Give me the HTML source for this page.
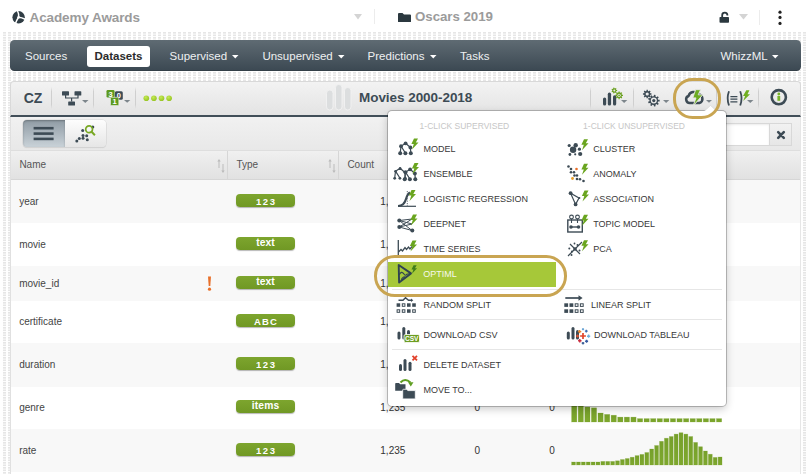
<!DOCTYPE html>
<html><head><meta charset="utf-8"><title>BigML</title><style>
*{margin:0;padding:0;box-sizing:border-box}
html,body{width:810px;height:474px;overflow:hidden;background:#fff;font-family:"Liberation Sans",sans-serif}
.a{position:absolute}
.t{position:absolute;white-space:nowrap;line-height:normal}
svg{overflow:visible}
</style></head><body>
<div class="a" style="left:2px;top:32px;width:806px;height:442px;background-color:#fff;background-image:linear-gradient(0deg,#fff 1px,transparent 1px),linear-gradient(90deg,transparent 1px,#e6e6e6 1px,#e6e6e6 4px,transparent 4px);background-size:5px 2.5px,5px 5px"></div>
<svg class="a" style="left:12px;top:11px;" width="13" height="13" viewBox="0 0 13 13"><circle cx="6.6" cy="6.3" r="6.2" fill="#2f3c44"/><path d="M5.4 -0.5 Q7.2 3.2 6.6 6.3 M6.6 6.3 Q9.8 6.6 13.2 8.2 M6.6 6.3 Q4.6 9.2 3.4 12.8" stroke="#fff" stroke-width="1.5" fill="none"/><circle cx="6.6" cy="6.3" r="1.3" fill="#fff"/></svg>
<div class="t" style="left:29.50px;top:9.58px;font-size:13.5px;color:#9b9b9b;font-weight:700;letter-spacing:-0.1px;">Academy Awards</div>
<svg class="a" style="left:353.5px;top:14px;" width="8" height="6" viewBox="0 0 8 6"><path d="M0 0 H8 L4 5.5 Z" fill="#d4d4d4"/></svg>
<div class="a" style="left:373.5px;top:9px;width:1px;height:15px;background:#ececec"></div>
<svg class="a" style="left:397.5px;top:12.5px;" width="13" height="9" viewBox="0 0 13 9"><path d="M0 1 Q0 0 1 0 H4.5 L6 1.5 H12 Q13 1.5 13 2.5 V8.5 Q13 9 12.5 9 H0.5 Q0 9 0 8.5 Z" fill="#2b383f"/></svg>
<div class="t" style="left:415.00px;top:9.26px;font-size:13.3px;color:#9b9b9b;font-weight:700;letter-spacing:-0.05px;">Oscars 2019</div>
<svg class="a" style="left:718.5px;top:11.5px;" width="11" height="11" viewBox="0 0 11 11"><path d="M3.2 5 V3.2 Q3.2 0.6 5.8 0.6 Q8.4 0.6 8.4 3.2 V3.6" stroke="#2b383f" stroke-width="1.8" fill="none"/><rect x="0.5" y="5" width="9.5" height="5.8" rx="0.8" fill="#2b383f"/></svg>
<svg class="a" style="left:738.5px;top:14px;" width="9" height="6" viewBox="0 0 9 6"><path d="M0 0 H9 L4.5 5.5 Z" fill="#d4d4d4"/></svg>
<div class="a" style="left:758.5px;top:9.5px;width:1px;height:15px;background:#ececec"></div>
<svg class="a" style="left:778px;top:10px;" width="4" height="16" viewBox="0 0 4 16"><circle cx="2" cy="2.2" r="1.6" fill="#222"/><circle cx="2" cy="7.4" r="1.6" fill="#222"/><circle cx="2" cy="13.4" r="1.6" fill="#222"/></svg>
<div class="a" style="left:10px;top:40px;width:790.5px;height:30.8px;border-radius:4.5px;background:linear-gradient(#5f6b73,#3b4852);box-shadow:inset 0 -1px 0 rgba(0,0,0,.12)"></div>
<div class="t" style="left:25.00px;top:49.79px;font-size:11.5px;color:#eef0f1;">Sources</div>
<div class="a" style="left:87px;top:46px;width:63px;height:20.5px;background:#fff;border-radius:3px"></div>
<div class="t" style="left:94.50px;top:49.79px;font-size:11.5px;color:#2b2b2b;font-weight:700;">Datasets</div>
<div class="t" style="left:169.60px;top:49.79px;font-size:11.5px;color:#eef0f1;">Supervised</div>
<svg class="a" style="left:232px;top:55px;" width="6.5" height="3.5" viewBox="0 0 6.5 3.5"><path d="M0 0 H6.5 L3.25 3.5 Z" fill="#fff"/></svg>
<div class="t" style="left:262.40px;top:49.79px;font-size:11.5px;color:#eef0f1;">Unsupervised</div>
<svg class="a" style="left:337.5px;top:55px;" width="6.5" height="3.5" viewBox="0 0 6.5 3.5"><path d="M0 0 H6.5 L3.25 3.5 Z" fill="#fff"/></svg>
<div class="t" style="left:367.60px;top:49.79px;font-size:11.5px;color:#eef0f1;">Predictions</div>
<svg class="a" style="left:429.5px;top:55px;" width="6.5" height="3.5" viewBox="0 0 6.5 3.5"><path d="M0 0 H6.5 L3.25 3.5 Z" fill="#fff"/></svg>
<div class="t" style="left:460.00px;top:49.79px;font-size:11.5px;color:#eef0f1;">Tasks</div>
<div class="t" style="left:720.40px;top:49.79px;font-size:11.5px;color:#eef0f1;">WhizzML</div>
<svg class="a" style="left:771.5px;top:55px;" width="6.5" height="3.5" viewBox="0 0 6.5 3.5"><path d="M0 0 H6.5 L3.25 3.5 Z" fill="#fff"/></svg>
<div class="a" style="left:10px;top:80.5px;width:791px;height:36.5px;border-radius:4px 4px 0 0;background:linear-gradient(#f3f3f3,#e3e3e3);border:1px solid #d9d9d9;border-bottom:2px solid #414e58"></div>
<div class="t" style="left:23.70px;top:90.33px;font-size:14px;color:#3d4b55;font-weight:700;">CZ</div>
<div class="a" style="left:51px;top:87px;width:1px;height:22px;background:linear-gradient(rgba(0,0,0,0),#cfcfcf 20%,#cfcfcf 80%,rgba(0,0,0,0))"></div>
<div class="a" style="left:93px;top:87px;width:1px;height:22px;background:linear-gradient(rgba(0,0,0,0),#cfcfcf 20%,#cfcfcf 80%,rgba(0,0,0,0))"></div>
<div class="a" style="left:135px;top:87px;width:1px;height:22px;background:linear-gradient(rgba(0,0,0,0),#cfcfcf 20%,#cfcfcf 80%,rgba(0,0,0,0))"></div>
<div class="a" style="left:590px;top:87px;width:1px;height:22px;background:linear-gradient(rgba(0,0,0,0),#cfcfcf 20%,#cfcfcf 80%,rgba(0,0,0,0))"></div>
<div class="a" style="left:632.5px;top:87px;width:1px;height:22px;background:linear-gradient(rgba(0,0,0,0),#cfcfcf 20%,#cfcfcf 80%,rgba(0,0,0,0))"></div>
<div class="a" style="left:716px;top:87px;width:1px;height:22px;background:linear-gradient(rgba(0,0,0,0),#cfcfcf 20%,#cfcfcf 80%,rgba(0,0,0,0))"></div>
<div class="a" style="left:758px;top:87px;width:1px;height:22px;background:linear-gradient(rgba(0,0,0,0),#cfcfcf 20%,#cfcfcf 80%,rgba(0,0,0,0))"></div>
<svg class="a" style="left:62px;top:91px;" width="20" height="15" viewBox="0 0 20 15"><rect x="0" y="0.3" width="7" height="4.3" rx="0.6" fill="#3d4b55"/><rect x="12.5" y="0.3" width="6.8" height="4.3" rx="0.6" fill="#3d4b55"/><path d="M3.6 4 V7 H16 V4 M9.6 7 V10.5" stroke="#3d4b55" stroke-width="1.2" fill="none"/><rect x="6.2" y="10.4" width="6.8" height="4.2" rx="0.6" fill="#3d4b55"/></svg>
<svg class="a" style="left:82.3px;top:100px;" width="6.5" height="3" viewBox="0 0 6.5 3"><path d="M0 0 H6.5 L3.25 3 Z" fill="#7d868c"/></svg>
<svg class="a" style="left:105.5px;top:90px;" width="18" height="16" viewBox="0 0 18 16"><rect x="8.8" y="1.3" width="8" height="8.5" rx="1.5" fill="#3d4b55"/><text x="12.8" y="8.3" font-size="7.5" font-weight="bold" fill="#fff" text-anchor="middle" font-family="Liberation Sans">0</text><rect x="0.5" y="0" width="8" height="7.5" rx="1.2" fill="#5d9a1e"/><text x="4.5" y="6.6" font-size="7.5" font-weight="bold" fill="#fff" text-anchor="middle" font-family="Liberation Sans">3</text><rect x="4.5" y="7.3" width="8.3" height="8.3" rx="1.2" fill="#5d9a1e" stroke="#f0f0f0" stroke-width="0.6"/><text x="8.6" y="14.3" font-size="7.5" font-weight="bold" fill="#fff" text-anchor="middle" font-family="Liberation Sans">1</text></svg>
<svg class="a" style="left:124.2px;top:100.2px;" width="6.3" height="2.8" viewBox="0 0 6.3 2.8"><path d="M0 0 H6.3 L3.15 2.8 Z" fill="#7d868c"/></svg>
<svg class="a" style="left:143px;top:94.8px;" width="30" height="7" viewBox="0 0 30 7"><circle cx="3.3" cy="3.2" r="2.8" fill="url(#gd)"/><circle cx="10.9" cy="3.2" r="2.8" fill="url(#gd)"/><circle cx="18.5" cy="3.2" r="2.8" fill="url(#gd)"/><circle cx="26.1" cy="3.2" r="2.8" fill="url(#gd)"/><defs><radialGradient id="gd" cx="40%" cy="35%" r="70%"><stop offset="0" stop-color="#c4ea55"/><stop offset="1" stop-color="#94c21f"/></radialGradient></defs></svg>
<svg class="a" style="left:326px;top:84px;" width="26" height="27" viewBox="0 0 26 27"><rect x="0.5" y="6" width="6.5" height="20" rx="3.2" fill="#dcdedf" stroke="#f4f4f4" stroke-width="0.8"/><rect x="9.5" y="0.5" width="6.5" height="25.5" rx="3.2" fill="#dcdedf" stroke="#f4f4f4" stroke-width="0.8"/><rect x="18.5" y="3.5" width="6.5" height="22.5" rx="3.2" fill="#dcdedf" stroke="#f4f4f4" stroke-width="0.8"/></svg>
<div class="t" style="left:359.00px;top:89.98px;font-size:13.5px;color:#3d4b55;font-weight:700;letter-spacing:-0.05px;">Movies 2000-2018</div>
<svg class="a" style="left:600px;top:86px;" width="30" height="22" viewBox="0 0 30 22"><rect x="3" y="11.4" width="3.2" height="8.2" rx="1.6" fill="#3d4b55"/><rect x="7.8" y="6.6" width="3.3" height="13" rx="1.6" fill="#3d4b55"/><rect x="13" y="9.3" width="3.2" height="10.3" rx="1.6" fill="#3d4b55"/><path d="M16.37 3.93 L17.16 4.01 L17.16 4.99 L16.37 5.07 L16.04 5.76 L16.47 6.43 L15.70 7.04 L15.14 6.47 L14.40 6.64 L14.14 7.40 L13.18 7.18 L13.28 6.39 L12.68 5.91 L11.94 6.18 L11.51 5.30 L12.19 4.88 L12.19 4.12 L11.51 3.70 L11.94 2.82 L12.68 3.09 L13.28 2.61 L13.18 1.82 L14.14 1.60 L14.40 2.36 L15.14 2.53 L15.70 1.96 L16.47 2.57 L16.04 3.24 Z" fill="#6aa01f"/><circle cx="14.3" cy="4.5" r="1.0" fill="#e9e9e9"/><path d="M21.91 8.63 L22.96 8.72 L22.96 9.88 L21.91 9.97 L21.56 10.81 L22.24 11.62 L21.42 12.44 L20.61 11.76 L19.77 12.11 L19.68 13.16 L18.52 13.16 L18.43 12.11 L17.59 11.76 L16.78 12.44 L15.96 11.62 L16.64 10.81 L16.29 9.97 L15.24 9.88 L15.24 8.72 L16.29 8.63 L16.64 7.79 L15.96 6.98 L16.78 6.16 L17.59 6.84 L18.43 6.49 L18.52 5.44 L19.68 5.44 L19.77 6.49 L20.61 6.84 L21.42 6.16 L22.24 6.98 L21.56 7.79 Z" fill="#6aa01f"/><circle cx="19.1" cy="9.3" r="1.6" fill="#e9e9e9"/><circle cx="19.1" cy="9.3" r="0.9" fill="#6aa01f"/></svg>
<svg class="a" style="left:621.2px;top:100px;" width="6.3" height="2.9" viewBox="0 0 6.3 2.9"><path d="M0 0 H6.3 L3.15 2.9 Z" fill="#7d868c"/></svg>
<svg class="a" style="left:640px;top:86px;" width="22" height="22" viewBox="0 0 22 22"><path d="M10.29 7.26 L11.45 7.36 L11.45 8.64 L10.29 8.74 L9.91 9.66 L10.66 10.55 L9.75 11.46 L8.86 10.71 L7.94 11.09 L7.84 12.25 L6.56 12.25 L6.46 11.09 L5.54 10.71 L4.65 11.46 L3.74 10.55 L4.49 9.66 L4.11 8.74 L2.95 8.64 L2.95 7.36 L4.11 7.26 L4.49 6.34 L3.74 5.45 L4.65 4.54 L5.54 5.29 L6.46 4.91 L6.56 3.75 L7.84 3.75 L7.94 4.91 L8.86 5.29 L9.75 4.54 L10.66 5.45 L9.91 6.34 Z" fill="#3d4b55"/><circle cx="7.2" cy="8" r="1.6" fill="#e9e9e9"/><path d="M18.07 13.69 L19.65 13.82 L19.65 15.38 L18.07 15.51 L17.65 16.65 L18.78 17.76 L17.78 18.96 L16.49 18.04 L15.44 18.65 L15.58 20.22 L14.05 20.49 L13.65 18.96 L12.45 18.75 L11.55 20.05 L10.20 19.27 L10.88 17.84 L10.10 16.91 L8.57 17.33 L8.04 15.87 L9.48 15.21 L9.48 13.99 L8.04 13.33 L8.57 11.87 L10.10 12.29 L10.88 11.36 L10.20 9.93 L11.55 9.15 L12.45 10.45 L13.65 10.24 L14.05 8.71 L15.58 8.98 L15.44 10.55 L16.49 11.16 L17.78 10.24 L18.78 11.44 L17.65 12.55 Z" fill="#3d4b55"/><circle cx="13.8" cy="14.6" r="3.0" fill="#e9e9e9"/><circle cx="13.8" cy="14.6" r="1.6" fill="#3d4b55"/></svg>
<svg class="a" style="left:663.2px;top:100px;" width="6.3" height="2.9" viewBox="0 0 6.3 2.9"><path d="M0 0 H6.3 L3.15 2.9 Z" fill="#7d868c"/></svg>
<svg class="a" style="left:684px;top:88px;" width="22" height="20" viewBox="0 0 22 20"><path d="M6 15 A3.6 3.6 0 0 1 4.6 8 A5.2 5.2 0 0 1 14.2 6.6 A4.3 4.3 0 0 1 15.4 15 Z" stroke="#3d4b55" stroke-width="2.5" fill="none" stroke-linejoin="round"/><path d="M11.6 1.7 H16.6 L14.2 6.8 H18.8 L9 18.2 L12 9.9 H8.8 Z" fill="#6cab22" stroke="#e8e8e8" stroke-width="0.9" stroke-linejoin="round"/></svg>
<svg class="a" style="left:705.5px;top:100px;" width="6" height="2.8" viewBox="0 0 6 2.8"><path d="M0 0 H6 L3.0 2.8 Z" fill="#7d868c"/></svg>
<svg class="a" style="left:725px;top:89px;" width="30" height="18" viewBox="0 0 30 18"><path d="M4 2.2 Q1.3 9.2 4 16.5 M15.2 2.2 Q17.9 9.2 15.2 16.5" stroke="#3d4b55" stroke-width="1.8" fill="none"/><path d="M5.4 7.6 H12.4 M5.4 10.2 H12.4 M5.4 12.8 H12.4" stroke="#3d4b55" stroke-width="1.25"/><path d="M21.3 1.2 H24.4 L22.5 5.3 H25 L18.2 11.9 L20.1 6.9 H18 Z" fill="#6fae1f"/></svg>
<svg class="a" style="left:747.3px;top:99.8px;" width="6.5" height="2.9" viewBox="0 0 6.5 2.9"><path d="M0 0 H6.5 L3.25 2.9 Z" fill="#7d868c"/></svg>
<svg class="a" style="left:769px;top:88px;" width="20" height="20" viewBox="0 0 20 20"><circle cx="9.8" cy="9.2" r="7.1" stroke="#3d4b55" stroke-width="2.6" fill="none"/><circle cx="9.8" cy="6" r="1.4" fill="#7ab52a"/><rect x="8.4" y="8" width="2.8" height="4.8" fill="#7ab52a"/></svg>
<div class="a" style="left:10px;top:117px;width:790px;height:33px;background:linear-gradient(#f1f1f1,#e8e8e8)"></div>
<div class="a" style="left:23px;top:120px;width:83px;height:26.5px;border-radius:4px;background:linear-gradient(#fdfdfd,#e6e6e6);box-shadow:0 0 0 0.6px #d6d6d6,0 1px 1px rgba(0,0,0,.12)"></div>
<div class="a" style="left:23px;top:120px;width:41.5px;height:26.5px;border-radius:4px 0 0 4px;background:linear-gradient(#8f9ba4,#c9d2d8);box-shadow:inset 0 1px 2px rgba(0,0,0,.25)"></div>
<svg class="a" style="left:33px;top:126px;" width="21" height="15" viewBox="0 0 21 15"><rect x="0.6" y="0.9" width="20" height="2.6" fill="#3d4b55"/><rect x="0.6" y="6.3" width="20" height="2.6" fill="#3d4b55"/><rect x="0.6" y="11.6" width="20" height="2.6" fill="#3d4b55"/></svg>
<svg class="a" style="left:74px;top:124px;" width="24" height="20" viewBox="0 0 24 20"><g fill="#3d4b55"><circle cx="2.8" cy="16.9" r="1.5"/><circle cx="5.3" cy="14.5" r="1.5"/><circle cx="9" cy="14.2" r="1.5"/><circle cx="9" cy="11.4" r="1.5"/><circle cx="12.7" cy="11.7" r="1.5"/><circle cx="13.3" cy="15.7" r="1.5"/><circle cx="8.7" cy="6.4" r="1.5"/><circle cx="18.8" cy="3.1" r="1.5"/></g><circle cx="15.1" cy="5.2" r="3.4" stroke="#78a824" stroke-width="1.7" fill="none"/><path d="M17.6 7.8 L20.9 11.3" stroke="#78a824" stroke-width="2"/></svg>
<div class="a" style="left:500px;top:122.5px;width:269px;height:23.7px;background:#fff;border:1px solid #d8d8d8;border-right:none;box-shadow:inset 0 1px 2px rgba(0,0,0,.08)"></div>
<div class="a" style="left:769px;top:122.5px;width:23px;height:23.7px;background:linear-gradient(#f2f2f2,#e6e6e6);border:1px solid #d8d8d8"></div>
<svg class="a" style="left:776.5px;top:130.5px;" width="8" height="8" viewBox="0 0 8 8"><path d="M1.2 1.2 L6.8 6.8 M6.8 1.2 L1.2 6.8" stroke="#3d4b55" stroke-width="2.6" stroke-linecap="round"/></svg>
<div class="a" style="left:10px;top:150px;width:790px;height:30px;background:linear-gradient(#f0f0f0,#e1e1e1);border-top:1px solid #dedede;border-bottom:1px solid #d6d6d6"></div>
<div class="a" style="left:227px;top:151px;width:1px;height:28px;background:#d6d6d6"></div>
<div class="a" style="left:337.5px;top:151px;width:1px;height:28px;background:#d6d6d6"></div>
<div class="t" style="left:19.40px;top:158.65px;font-size:10px;color:#555;">Name</div>
<div class="t" style="left:236.50px;top:158.65px;font-size:10px;color:#555;">Type</div>
<div class="t" style="left:347.40px;top:158.65px;font-size:10px;color:#555;">Count</div>
<svg class="a" style="left:217px;top:158px;" width="8" height="16" viewBox="0 0 8 16"><path d="M2 1 L0.3 3.5 H1.5 V10 H2.5 V3.5 H3.7 Z M6 15 L4.3 12.5 H5.5 V6 H6.5 V12.5 H7.7 Z" fill="#bbb"/></svg>
<svg class="a" style="left:327.5px;top:158px;" width="8" height="16" viewBox="0 0 8 16"><path d="M2 1 L0.3 3.5 H1.5 V10 H2.5 V3.5 H3.7 Z M6 15 L4.3 12.5 H5.5 V6 H6.5 V12.5 H7.7 Z" fill="#bbb"/></svg>
<div class="a" style="left:10px;top:180px;width:790px;height:43px;background:#f8f8f8"></div>
<div class="a" style="left:10px;top:223px;width:790px;height:43px;background:#fff"></div>
<div class="a" style="left:10px;top:266px;width:790px;height:35px;background:#f8f8f8"></div>
<div class="a" style="left:10px;top:301px;width:790px;height:42px;background:#fff"></div>
<div class="a" style="left:10px;top:343px;width:790px;height:44px;background:#f8f8f8"></div>
<div class="a" style="left:10px;top:387px;width:790px;height:42px;background:#fff"></div>
<div class="a" style="left:10px;top:429px;width:790px;height:43px;background:#f8f8f8"></div>
<div class="t" style="left:19.20px;top:195.95px;font-size:10px;color:#444;">year</div>
<div class="a" style="left:236px;top:193.6px;width:59px;height:13px;border-radius:4px;background:linear-gradient(#7da52e,#709824);box-shadow:0 1px 1px rgba(0,0,0,.28)"></div>
<div class="t" style="left:236.80px;top:195.50px;font-size:9.5px;color:#fff;font-weight:700;letter-spacing:1.6px;width:59px;text-align:center;">123</div>
<div class="t" style="left:380.30px;top:195.95px;font-size:10px;color:#333;">1,235</div>
<div class="t" style="left:474.50px;top:195.95px;font-size:10px;color:#333;">0</div>
<div class="t" style="left:549.30px;top:195.95px;font-size:10px;color:#333;">0</div>
<div class="t" style="left:19.20px;top:238.95px;font-size:10px;color:#444;">movie</div>
<div class="a" style="left:236px;top:236.6px;width:59px;height:13px;border-radius:4px;background:linear-gradient(#7da52e,#709824);box-shadow:0 1px 1px rgba(0,0,0,.28)"></div>
<div class="t" style="left:236.05px;top:236.68px;font-size:10.3px;color:#fff;font-weight:700;letter-spacing:0.1px;width:59px;text-align:center;">text</div>
<div class="t" style="left:380.30px;top:238.95px;font-size:10px;color:#333;">1,235</div>
<div class="t" style="left:474.50px;top:238.95px;font-size:10px;color:#333;">0</div>
<div class="t" style="left:549.30px;top:238.95px;font-size:10px;color:#333;">0</div>
<div class="t" style="left:19.20px;top:277.95px;font-size:10px;color:#444;">movie_id</div>
<div class="a" style="left:236px;top:275.6px;width:59px;height:13px;border-radius:4px;background:linear-gradient(#7da52e,#709824);box-shadow:0 1px 1px rgba(0,0,0,.28)"></div>
<div class="t" style="left:236.05px;top:275.68px;font-size:10.3px;color:#fff;font-weight:700;letter-spacing:0.1px;width:59px;text-align:center;">text</div>
<div class="t" style="left:380.30px;top:277.95px;font-size:10px;color:#333;">1,235</div>
<div class="t" style="left:474.50px;top:277.95px;font-size:10px;color:#333;">0</div>
<div class="t" style="left:549.30px;top:277.95px;font-size:10px;color:#333;">0</div>
<div class="t" style="left:19.20px;top:316.45px;font-size:10px;color:#444;">certificate</div>
<div class="a" style="left:236px;top:314.1px;width:59px;height:13px;border-radius:4px;background:linear-gradient(#7da52e,#709824);box-shadow:0 1px 1px rgba(0,0,0,.28)"></div>
<div class="t" style="left:236.55px;top:316.00px;font-size:9.5px;color:#fff;font-weight:700;letter-spacing:1.1px;width:59px;text-align:center;">ABC</div>
<div class="t" style="left:380.30px;top:316.45px;font-size:10px;color:#333;">1,235</div>
<div class="t" style="left:474.50px;top:316.45px;font-size:10px;color:#333;">0</div>
<div class="t" style="left:549.30px;top:316.45px;font-size:10px;color:#333;">0</div>
<div class="t" style="left:19.20px;top:359.45px;font-size:10px;color:#444;">duration</div>
<div class="a" style="left:236px;top:357.1px;width:59px;height:13px;border-radius:4px;background:linear-gradient(#7da52e,#709824);box-shadow:0 1px 1px rgba(0,0,0,.28)"></div>
<div class="t" style="left:236.80px;top:359.00px;font-size:9.5px;color:#fff;font-weight:700;letter-spacing:1.6px;width:59px;text-align:center;">123</div>
<div class="t" style="left:380.30px;top:359.45px;font-size:10px;color:#333;">1,235</div>
<div class="t" style="left:474.50px;top:359.45px;font-size:10px;color:#333;">0</div>
<div class="t" style="left:549.30px;top:359.45px;font-size:10px;color:#333;">0</div>
<div class="t" style="left:19.20px;top:402.45px;font-size:10px;color:#444;">genre</div>
<div class="a" style="left:236px;top:400.1px;width:59px;height:13px;border-radius:4px;background:linear-gradient(#7da52e,#709824);box-shadow:0 1px 1px rgba(0,0,0,.28)"></div>
<div class="t" style="left:236.05px;top:400.18px;font-size:10.3px;color:#fff;font-weight:700;letter-spacing:0.1px;width:59px;text-align:center;">items</div>
<div class="t" style="left:380.30px;top:402.45px;font-size:10px;color:#333;">1,235</div>
<div class="t" style="left:474.50px;top:402.45px;font-size:10px;color:#333;">0</div>
<div class="t" style="left:549.30px;top:402.45px;font-size:10px;color:#333;">0</div>
<div class="t" style="left:19.20px;top:444.95px;font-size:10px;color:#444;">rate</div>
<div class="a" style="left:236px;top:442.6px;width:59px;height:13px;border-radius:4px;background:linear-gradient(#7da52e,#709824);box-shadow:0 1px 1px rgba(0,0,0,.28)"></div>
<div class="t" style="left:236.80px;top:444.50px;font-size:9.5px;color:#fff;font-weight:700;letter-spacing:1.6px;width:59px;text-align:center;">123</div>
<div class="t" style="left:380.30px;top:444.95px;font-size:10px;color:#333;">1,235</div>
<div class="t" style="left:474.50px;top:444.95px;font-size:10px;color:#333;">0</div>
<div class="t" style="left:549.30px;top:444.95px;font-size:10px;color:#333;">0</div>
<svg class="a" style="left:206.5px;top:275.5px;" width="5" height="16" viewBox="0 0 5 16"><path d="M1 0.5 H4 L3.3 10 H1.7 Z" fill="#e8702a"/><circle cx="2.5" cy="13.2" r="1.6" fill="#e8702a"/></svg>
<svg class="a" style="left:0;top:0" width="810" height="474"><defs><linearGradient id="hg" x1="0" x2="0" y1="0" y2="1"><stop offset="0" stop-color="#76a02a"/><stop offset="1" stop-color="#7ea82e"/></linearGradient></defs><g transform="translate(571.6,0)"><rect x="0.00" y="405.00" width="5.27" height="17.00" fill="url(#hg)" stroke="rgba(120,160,40,.35)" stroke-width="0.6"/><rect x="6.58" y="406.00" width="5.27" height="16.00" fill="url(#hg)" stroke="rgba(120,160,40,.35)" stroke-width="0.6"/><rect x="13.17" y="407.00" width="5.27" height="15.00" fill="url(#hg)" stroke="rgba(120,160,40,.35)" stroke-width="0.6"/><rect x="19.75" y="407.80" width="5.27" height="14.20" fill="url(#hg)" stroke="rgba(120,160,40,.35)" stroke-width="0.6"/><rect x="26.33" y="413.00" width="5.27" height="9.00" fill="url(#hg)" stroke="rgba(120,160,40,.35)" stroke-width="0.6"/><rect x="32.91" y="414.40" width="5.27" height="7.60" fill="url(#hg)" stroke="rgba(120,160,40,.35)" stroke-width="0.6"/><rect x="39.50" y="415.20" width="5.27" height="6.80" fill="url(#hg)" stroke="rgba(120,160,40,.35)" stroke-width="0.6"/><rect x="46.08" y="417.10" width="5.27" height="4.90" fill="url(#hg)" stroke="rgba(120,160,40,.35)" stroke-width="0.6"/><rect x="52.66" y="417.10" width="5.27" height="4.90" fill="url(#hg)" stroke="rgba(120,160,40,.35)" stroke-width="0.6"/><rect x="59.24" y="417.10" width="5.27" height="4.90" fill="url(#hg)" stroke="rgba(120,160,40,.35)" stroke-width="0.6"/><rect x="65.83" y="418.60" width="5.27" height="3.40" fill="url(#hg)" stroke="rgba(120,160,40,.35)" stroke-width="0.6"/><rect x="72.41" y="418.60" width="5.27" height="3.40" fill="url(#hg)" stroke="rgba(120,160,40,.35)" stroke-width="0.6"/><rect x="78.99" y="418.60" width="5.27" height="3.40" fill="url(#hg)" stroke="rgba(120,160,40,.35)" stroke-width="0.6"/><rect x="85.57" y="418.60" width="5.27" height="3.40" fill="url(#hg)" stroke="rgba(120,160,40,.35)" stroke-width="0.6"/><rect x="92.16" y="418.60" width="5.27" height="3.40" fill="url(#hg)" stroke="rgba(120,160,40,.35)" stroke-width="0.6"/><rect x="98.74" y="418.60" width="5.27" height="3.40" fill="url(#hg)" stroke="rgba(120,160,40,.35)" stroke-width="0.6"/><rect x="105.32" y="418.60" width="5.27" height="3.40" fill="url(#hg)" stroke="rgba(120,160,40,.35)" stroke-width="0.6"/><rect x="111.90" y="418.60" width="5.27" height="3.40" fill="url(#hg)" stroke="rgba(120,160,40,.35)" stroke-width="0.6"/><rect x="118.49" y="418.60" width="5.27" height="3.40" fill="url(#hg)" stroke="rgba(120,160,40,.35)" stroke-width="0.6"/><rect x="125.07" y="418.60" width="5.27" height="3.40" fill="url(#hg)" stroke="rgba(120,160,40,.35)" stroke-width="0.6"/><rect x="131.65" y="418.60" width="5.27" height="3.40" fill="url(#hg)" stroke="rgba(120,160,40,.35)" stroke-width="0.6"/><rect x="138.23" y="418.60" width="5.27" height="3.40" fill="url(#hg)" stroke="rgba(120,160,40,.35)" stroke-width="0.6"/><rect x="144.82" y="418.60" width="5.27" height="3.40" fill="url(#hg)" stroke="rgba(120,160,40,.35)" stroke-width="0.6"/></g><g transform="translate(571.6,0)"><rect x="0.00" y="462.00" width="3.91" height="3.00" fill="url(#hg)" stroke="rgba(120,160,40,.35)" stroke-width="0.6"/><rect x="4.88" y="462.00" width="3.91" height="3.00" fill="url(#hg)" stroke="rgba(120,160,40,.35)" stroke-width="0.6"/><rect x="9.77" y="462.00" width="3.91" height="3.00" fill="url(#hg)" stroke="rgba(120,160,40,.35)" stroke-width="0.6"/><rect x="14.65" y="462.00" width="3.91" height="3.00" fill="url(#hg)" stroke="rgba(120,160,40,.35)" stroke-width="0.6"/><rect x="19.54" y="462.00" width="3.91" height="3.00" fill="url(#hg)" stroke="rgba(120,160,40,.35)" stroke-width="0.6"/><rect x="24.42" y="462.00" width="3.91" height="3.00" fill="url(#hg)" stroke="rgba(120,160,40,.35)" stroke-width="0.6"/><rect x="29.30" y="461.40" width="3.91" height="3.60" fill="url(#hg)" stroke="rgba(120,160,40,.35)" stroke-width="0.6"/><rect x="34.19" y="461.40" width="3.91" height="3.60" fill="url(#hg)" stroke="rgba(120,160,40,.35)" stroke-width="0.6"/><rect x="39.07" y="461.40" width="3.91" height="3.60" fill="url(#hg)" stroke="rgba(120,160,40,.35)" stroke-width="0.6"/><rect x="43.95" y="460.80" width="3.91" height="4.20" fill="url(#hg)" stroke="rgba(120,160,40,.35)" stroke-width="0.6"/><rect x="48.84" y="459.50" width="3.91" height="5.50" fill="url(#hg)" stroke="rgba(120,160,40,.35)" stroke-width="0.6"/><rect x="53.72" y="458.50" width="3.91" height="6.50" fill="url(#hg)" stroke="rgba(120,160,40,.35)" stroke-width="0.6"/><rect x="58.61" y="457.20" width="3.91" height="7.80" fill="url(#hg)" stroke="rgba(120,160,40,.35)" stroke-width="0.6"/><rect x="63.49" y="455.60" width="3.91" height="9.40" fill="url(#hg)" stroke="rgba(120,160,40,.35)" stroke-width="0.6"/><rect x="68.37" y="454.40" width="3.91" height="10.60" fill="url(#hg)" stroke="rgba(120,160,40,.35)" stroke-width="0.6"/><rect x="73.26" y="452.50" width="3.91" height="12.50" fill="url(#hg)" stroke="rgba(120,160,40,.35)" stroke-width="0.6"/><rect x="78.14" y="449.00" width="3.91" height="16.00" fill="url(#hg)" stroke="rgba(120,160,40,.35)" stroke-width="0.6"/><rect x="83.03" y="445.50" width="3.91" height="19.50" fill="url(#hg)" stroke="rgba(120,160,40,.35)" stroke-width="0.6"/><rect x="87.91" y="441.30" width="3.91" height="23.70" fill="url(#hg)" stroke="rgba(120,160,40,.35)" stroke-width="0.6"/><rect x="92.79" y="438.20" width="3.91" height="26.80" fill="url(#hg)" stroke="rgba(120,160,40,.35)" stroke-width="0.6"/><rect x="97.68" y="436.50" width="3.91" height="28.50" fill="url(#hg)" stroke="rgba(120,160,40,.35)" stroke-width="0.6"/><rect x="102.56" y="434.10" width="3.91" height="30.90" fill="url(#hg)" stroke="rgba(120,160,40,.35)" stroke-width="0.6"/><rect x="107.45" y="432.70" width="3.91" height="32.30" fill="url(#hg)" stroke="rgba(120,160,40,.35)" stroke-width="0.6"/><rect x="112.33" y="434.10" width="3.91" height="30.90" fill="url(#hg)" stroke="rgba(120,160,40,.35)" stroke-width="0.6"/><rect x="117.21" y="436.50" width="3.91" height="28.50" fill="url(#hg)" stroke="rgba(120,160,40,.35)" stroke-width="0.6"/><rect x="122.10" y="442.40" width="3.91" height="22.60" fill="url(#hg)" stroke="rgba(120,160,40,.35)" stroke-width="0.6"/><rect x="126.98" y="446.70" width="3.91" height="18.30" fill="url(#hg)" stroke="rgba(120,160,40,.35)" stroke-width="0.6"/><rect x="131.86" y="451.00" width="3.91" height="14.00" fill="url(#hg)" stroke="rgba(120,160,40,.35)" stroke-width="0.6"/><rect x="136.75" y="454.20" width="3.91" height="10.80" fill="url(#hg)" stroke="rgba(120,160,40,.35)" stroke-width="0.6"/><rect x="141.63" y="457.40" width="3.91" height="7.60" fill="url(#hg)" stroke="rgba(120,160,40,.35)" stroke-width="0.6"/><rect x="146.52" y="457.00" width="3.91" height="8.00" fill="url(#hg)" stroke="rgba(120,160,40,.35)" stroke-width="0.6"/></g></svg>
<div class="a" style="left:10px;top:472px;width:791px;height:2px;background:#fff"></div>
<div class="a" style="left:10px;top:117px;width:1px;height:357px;background:#e0e0e0"></div>
<div class="a" style="left:800px;top:117px;width:1px;height:357px;background:#e6e6e6"></div>
<div class="a" style="left:388px;top:111px;width:338px;height:295px;background:#fff;border-radius:4px;box-shadow:0 0 0 1px rgba(0,0,0,.22),0 3px 9px rgba(0,0,0,.22)"></div>
<svg class="a" style="left:703.5px;top:105px;" width="13" height="7" viewBox="0 0 13 7"><path d="M0 6.5 L6.5 0.5 L13 6.5 Z" fill="#fff" stroke="#d0d0d0" stroke-width="0.5"/><rect x="0" y="6" width="13" height="2" fill="#fff"/></svg>
<div class="t" style="left:419.60px;top:121.41px;font-size:8.5px;color:#c6c6c6;">1-CLICK SUPERVISED</div>
<div class="t" style="left:583.10px;top:121.41px;font-size:8.5px;color:#c6c6c6;">1-CLICK UNSUPERVISED</div>
<div class="t" style="left:423.50px;top:143.85px;font-size:9px;color:#383838;">MODEL</div>
<div class="t" style="left:593.20px;top:143.85px;font-size:9px;color:#383838;">CLUSTER</div>
<div class="t" style="left:423.50px;top:168.85px;font-size:9px;color:#383838;">ENSEMBLE</div>
<div class="t" style="left:593.20px;top:168.85px;font-size:9px;color:#383838;">ANOMALY</div>
<div class="t" style="left:423.50px;top:193.85px;font-size:9px;color:#383838;">LOGISTIC REGRESSION</div>
<div class="t" style="left:593.20px;top:193.85px;font-size:9px;color:#383838;">ASSOCIATION</div>
<div class="t" style="left:423.50px;top:218.85px;font-size:9px;color:#383838;">DEEPNET</div>
<div class="t" style="left:593.20px;top:218.85px;font-size:9px;color:#383838;">TOPIC MODEL</div>
<div class="t" style="left:423.50px;top:243.85px;font-size:9px;color:#383838;">TIME SERIES</div>
<div class="t" style="left:593.20px;top:243.85px;font-size:9px;color:#383838;">PCA</div>
<div class="a" style="left:388px;top:262px;width:168px;height:25px;background:#a6c839"></div>
<div class="t" style="left:423.20px;top:269.46px;font-size:9px;color:#f6f8ee;">OPTIML</div>
<div class="a" style="left:392px;top:288.5px;width:330px;height:1px;background:#e6e6e6"></div>
<div class="a" style="left:392px;top:319px;width:330px;height:1px;background:#e6e6e6"></div>
<div class="a" style="left:392px;top:349px;width:330px;height:1px;background:#e6e6e6"></div>
<div class="t" style="left:423.40px;top:299.66px;font-size:9px;color:#383838;">RANDOM SPLIT</div>
<div class="t" style="left:591.10px;top:299.66px;font-size:9px;color:#383838;">LINEAR SPLIT</div>
<div class="t" style="left:423.40px;top:330.06px;font-size:9px;color:#383838;">DOWNLOAD CSV</div>
<div class="t" style="left:593.90px;top:330.06px;font-size:9px;color:#383838;">DOWNLOAD TABLEAU</div>
<div class="t" style="left:423.40px;top:359.86px;font-size:9px;color:#383838;">DELETE DATASET</div>
<div class="t" style="left:423.40px;top:385.36px;font-size:9px;color:#383838;">MOVE TO...</div>
<svg class="a" style="left:398px;top:138px;" width="22" height="18" viewBox="0 0 22 18"><g transform="translate(1,3)" stroke="#3d4b55" stroke-width="1.2" fill="none"><path d="M6.6 2.3 L2 5.2 M6.6 2.3 L11.4 6.5 M2 5.2 L1.2 12 M2 5.2 L6.4 12 M11.4 6.5 L11.8 12"/></g><g transform="translate(1,3)" fill="#3d4b55"><circle cx="6.6" cy="2.3" r="1.9"/><circle cx="2" cy="5.2" r="1.9"/><circle cx="11.4" cy="6.5" r="1.9"/><circle cx="1.2" cy="12.3" r="2"/><circle cx="6.4" cy="12.3" r="2"/><circle cx="11.8" cy="12.3" r="2"/></g><path transform="translate(13,0.4) scale(1.0)" d="M3 0 H7 L4.8 4 H7.5 L1 11 L2.8 5.6 H0.4 Z" fill="#6aa51f"/></svg>
<svg class="a" style="left:393px;top:162px;" width="27" height="19" viewBox="0 0 27 19"><g transform="translate(0.5,4)" stroke="#3d4b55" stroke-width="1.2" fill="none"><path d="M6.6 2.3 L2 5.2 M6.6 2.3 L11.4 6.5 M2 5.2 L1.2 12 M2 5.2 L6.4 12 M11.4 6.5 L11.8 12"/></g><g transform="translate(0.5,4)" fill="#3d4b55"><circle cx="6.6" cy="2.3" r="1.3"/><circle cx="2" cy="5.2" r="1.3"/><circle cx="11.4" cy="6.5" r="1.3"/><circle cx="1.2" cy="12.3" r="1.4"/><circle cx="6.4" cy="12.3" r="1.4"/><circle cx="11.8" cy="12.3" r="1.4"/></g><g transform="translate(10.5,5)" stroke="#3d4b55" stroke-width="1.2" fill="none"><path d="M6.6 2.3 L2 5.2 M6.6 2.3 L11.4 6.5 M2 5.2 L1.2 12 M2 5.2 L6.4 12 M11.4 6.5 L11.8 12"/></g><g transform="translate(10.5,5)" fill="#3d4b55"><circle cx="6.6" cy="2.3" r="1.9"/><circle cx="2" cy="5.2" r="1.9"/><circle cx="11.4" cy="6.5" r="1.9"/><circle cx="1.2" cy="12.3" r="2"/><circle cx="6.4" cy="12.3" r="2"/><circle cx="11.8" cy="12.3" r="2"/></g><path transform="translate(18.5,1) scale(1.0)" d="M3 0 H7 L4.8 4 H7.5 L1 11 L2.8 5.6 H0.4 Z" fill="#6aa51f"/></svg>
<svg class="a" style="left:397px;top:190px;" width="22" height="18" viewBox="0 0 22 18"><path d="M1 16 Q7 16 9 9 Q10.5 4 13 2.5" stroke="#3d4b55" stroke-width="2.2" fill="none"/><path d="M1 16.3 H19" stroke="#3d4b55" stroke-width="1.2"/><path d="M10.3 1 V16" stroke="#3d4b55" stroke-width="0.8" stroke-dasharray="1.2 1.2"/><path transform="translate(11.5,0) scale(1.0)" d="M3 0 H7 L4.8 4 H7.5 L1 11 L2.8 5.6 H0.4 Z" fill="#6aa51f"/></svg>
<svg class="a" style="left:397px;top:214px;" width="22" height="19" viewBox="0 0 22 19"><g stroke="#3d4b55" stroke-width="1" fill="none"><path d="M2.3 6.5 L15 5 M2.3 6.5 L15 10 M2.3 6.5 L15 16.5 M2.3 13 L15 5 M2.3 13 L15 10 M2.3 13 L15 16.5"/></g><g fill="#3d4b55"><circle cx="2.3" cy="6.5" r="2"/><circle cx="2.3" cy="13" r="2"/><circle cx="15.3" cy="16.5" r="2"/></g><path transform="translate(13,0.5) scale(1.0)" d="M3 0 H7 L4.8 4 H7.5 L1 11 L2.8 5.6 H0.4 Z" fill="#6aa51f"/></svg>
<svg class="a" style="left:397px;top:239px;" width="22" height="17" viewBox="0 0 22 17"><path d="M1.3 1 V16" stroke="#3d4b55" stroke-width="1.3"/><path d="M1.5 13 L4 10.5 L5.5 12 L8 8.5 L9.5 10.5 L11.5 8 L13 10 L15 7.5" stroke="#3d4b55" stroke-width="1.3" fill="none"/><path transform="translate(12.5,1.5) scale(1.0)" d="M3 0 H7 L4.8 4 H7.5 L1 11 L2.8 5.6 H0.4 Z" fill="#6aa51f"/></svg>
<svg class="a" style="left:397px;top:263px;" width="22" height="22" viewBox="0 0 22 22"><path d="M1.7 2 L2.1 19.5 L14 10.4 Z" stroke="#2f4152" stroke-width="1.9" fill="none" stroke-linejoin="round"/><path d="M2.3 11.6 Q4.6 7.6 6.6 10.6 Q8.2 13.6 9.8 11.2 L13.6 10.6 M4.2 16.8 Q6.4 12.6 8.4 14.6" stroke="#2f4152" stroke-width="1.15" fill="none"/><path transform="translate(14.2,2.2) scale(0.78)" d="M3 0 H7 L4.8 4 H7.5 L1 11 L2.8 5.6 H0.4 Z" fill="#3f7d1a"/></svg>
<svg class="a" style="left:396px;top:297px;" width="22" height="18" viewBox="0 0 22 18"><path d="M2.5 3.3 H7 L9.5 0.8 L12.5 3.3 H15.5" stroke="#3d4b55" stroke-width="1.4" fill="none"/><path d="M15 1.5 L17.3 3.3 L15 5 Z" fill="#3d4b55"/><rect x="0.6" y="6.3" width="3.6" height="3.5" fill="#3d4b55"/><rect x="6.3" y="6.8" width="2.6" height="2.5" fill="none" stroke="#3d4b55" stroke-width="1"/><rect x="11.0" y="6.3" width="3.6" height="3.5" fill="#3d4b55"/><rect x="16.200000000000003" y="6.3" width="3.6" height="3.5" fill="#3d4b55"/><rect x="1.1" y="12.8" width="2.6" height="2.5" fill="none" stroke="#3d4b55" stroke-width="1"/><rect x="6.3" y="12.8" width="2.6" height="2.5" fill="none" stroke="#3d4b55" stroke-width="1"/><rect x="11.0" y="12.3" width="3.6" height="3.5" fill="#3d4b55"/><rect x="16.700000000000003" y="12.8" width="2.6" height="2.5" fill="none" stroke="#3d4b55" stroke-width="1"/></svg>
<svg class="a" style="left:564px;top:297px;" width="22" height="18" viewBox="0 0 22 18"><path d="M1.3 1 H15.5" stroke="#3d4b55" stroke-width="1.7"/><path d="M14.5 -1.8 L18.6 1 L14.5 3.8 Z" fill="#3d4b55"/><rect x="0.3" y="6.3" width="3.8" height="3.6" fill="#3d4b55"/><rect x="5.5" y="6.3" width="3.8" height="3.6" fill="#3d4b55"/><rect x="11.200000000000001" y="6.8" width="2.8" height="2.6" fill="none" stroke="#3d4b55" stroke-width="1"/><rect x="16.400000000000002" y="6.8" width="2.8" height="2.6" fill="none" stroke="#3d4b55" stroke-width="1"/><rect x="0.3" y="12.3" width="3.8" height="3.6" fill="#3d4b55"/><rect x="5.5" y="12.3" width="3.8" height="3.6" fill="#3d4b55"/><rect x="11.200000000000001" y="12.8" width="2.8" height="2.6" fill="none" stroke="#3d4b55" stroke-width="1"/><rect x="16.400000000000002" y="12.8" width="2.8" height="2.6" fill="none" stroke="#3d4b55" stroke-width="1"/></svg>
<svg class="a" style="left:397px;top:326px;" width="24" height="18" viewBox="0 0 24 18"><rect x="0.5" y="5.5" width="3" height="8" rx="1.5" fill="#3d4b55"/><rect x="5.3" y="1" width="3" height="12.5" rx="1.5" fill="#3d4b55"/><rect x="10" y="4" width="3" height="9.5" rx="1.5" fill="#3d4b55"/><rect x="7" y="8.5" width="15.5" height="8" rx="1.5" fill="#6c9d22" stroke="#fff" stroke-width="0.8"/><text x="14.75" y="15.2" font-size="6.5" font-weight="bold" fill="#fff" text-anchor="middle" font-family="Liberation Sans">CSV</text></svg>
<svg class="a" style="left:566px;top:326px;" width="24" height="18" viewBox="0 0 24 18"><rect x="0.8" y="5.5" width="3" height="8" rx="1.5" fill="#3d4b55"/><rect x="5.5" y="1" width="3" height="12.5" rx="1.5" fill="#3d4b55"/><rect x="10" y="4" width="3" height="9.5" rx="1.5" fill="#3d4b55"/><path d="M14.1 10 H19.9 M17 7.1 V12.9" stroke="#e0452a" stroke-width="1.7"/><path d="M11.9 5.6 H15.299999999999999 M13.6 3.8999999999999995 V7.3" stroke="#e8842c" stroke-width="1.4"/><path d="M18.900000000000002 5.2 H21.7 M20.3 3.8000000000000003 V6.6" stroke="#3d6db0" stroke-width="1.3"/><path d="M21.0 10.2 H24.200000000000003 M22.6 8.6 V11.799999999999999" stroke="#6fb0dc" stroke-width="1.4"/><path d="M19.1 15.2 H22.1 M20.6 13.7 V16.7" stroke="#3558a0" stroke-width="1.4"/><path d="M12.100000000000001 14.8 H15.5 M13.8 13.100000000000001 V16.5" stroke="#c92a3c" stroke-width="1.4"/><path d="M10.1 10 H13.1 M11.6 8.5 V11.5" stroke="#d8502e" stroke-width="1.3"/><path d="M15.7 17.2 H18.3 M17 15.899999999999999 V18.5" stroke="#2b4f8c" stroke-width="1.2"/><path d="M15.9 3.2 H18.1 M17 2.1 V4.300000000000001" stroke="#5a9ad0" stroke-width="1.1"/></svg>
<svg class="a" style="left:398px;top:354px;" width="21" height="18" viewBox="0 0 21 18"><rect x="1" y="10" width="3" height="7" rx="1.5" fill="#3d4b55"/><rect x="5.5" y="4.9" width="3" height="12.1" rx="1.5" fill="#3d4b55"/><rect x="10.5" y="7.8" width="3" height="9.2" rx="1.5" fill="#3d4b55"/><path d="M14.5 1.8 L19 6.3 M19 1.8 L14.5 6.3" stroke="#e2422c" stroke-width="1.8"/></svg>
<svg class="a" style="left:394px;top:378px;" width="24" height="22" viewBox="0 0 24 22"><path d="M1.2 5.8 Q1.2 5 2 5 H5 L6.2 6.3 H11.5 V12.8 H1.2 Z" fill="#3d4b55"/><path d="M8.7 12 Q8.7 11.3 9.4 11.3 H12.5 L13.8 12.6 H21.3 V20.9 H8.7 Z" fill="#3d4b55" stroke="#fff" stroke-width="0.8"/><path d="M6.5 4.5 Q11 -0.5 16.5 4.5" stroke="#5f9e22" stroke-width="2" fill="none"/><path d="M14 4.2 H19.5 L16.8 8.5 Z" fill="#5f9e22"/></svg>
<svg class="a" style="left:566px;top:138px;" width="24" height="19" viewBox="0 0 24 19"><g fill="#3d4b55"><circle cx="3.2" cy="7.5" r="1.6"/><circle cx="9.7" cy="7.3" r="2.2"/><circle cx="7.1" cy="11.7" r="3.2"/><circle cx="13.4" cy="11.2" r="1.6"/><circle cx="3.9" cy="16.5" r="1.4"/><circle cx="9.2" cy="16.3" r="1.1"/><circle cx="14.2" cy="16" r="2.1"/></g><path transform="translate(15,1.2) scale(1.0)" d="M3 0 H7 L4.8 4 H7.5 L1 11 L2.8 5.6 H0.4 Z" fill="#6aa51f"/></svg>
<svg class="a" style="left:566px;top:163px;" width="24" height="20" viewBox="0 0 24 20"><g fill="#3d4b55"><circle cx="2.5" cy="3.5" r="1.3"/><circle cx="5" cy="6" r="1.3"/><circle cx="5" cy="9.3" r="1.3"/><circle cx="8" cy="9.3" r="1.3"/><circle cx="8.5" cy="12.5" r="1.3"/><circle cx="11" cy="12.5" r="1.3"/><circle cx="11" cy="16" r="1.3"/><circle cx="14" cy="16.3" r="1.3"/><circle cx="17.5" cy="18" r="1.3"/></g><circle cx="10.5" cy="6" r="1.3" fill="#e8702a"/><circle cx="6.5" cy="15.5" r="1.4" fill="#e8a02a"/><path transform="translate(15,0.8) scale(1.0)" d="M3 0 H7 L4.8 4 H7.5 L1 11 L2.8 5.6 H0.4 Z" fill="#6aa51f"/></svg>
<svg class="a" style="left:566px;top:189px;" width="24" height="19" viewBox="0 0 24 19"><path d="M4.6 4.2 L9.6 15.4 L13 9 Z" stroke="#3d4b55" stroke-width="1.2" fill="none"/><g fill="#3d4b55"><circle cx="4.6" cy="4.2" r="1.9"/><circle cx="9.6" cy="15.4" r="1.9"/><circle cx="13.4" cy="9" r="1"/></g><path transform="translate(15.5,1.5) scale(1.0)" d="M3 0 H7 L4.8 4 H7.5 L1 11 L2.8 5.6 H0.4 Z" fill="#6aa51f"/></svg>
<svg class="a" style="left:566px;top:214px;" width="24" height="20" viewBox="0 0 24 20"><rect x="1.8" y="6" width="14.5" height="12" fill="none" stroke="#3d4b55" stroke-width="1.4"/><circle cx="5.5" cy="3" r="1.9" fill="none" stroke="#3d4b55" stroke-width="1.1"/><circle cx="11.5" cy="3" r="1.9" fill="none" stroke="#3d4b55" stroke-width="1.1"/><path d="M5.5 5 V9 M11.5 5 V9" stroke="#3d4b55" stroke-width="1.1"/><path d="M5 13 H12.5" stroke="#3d4b55" stroke-width="1.4"/><circle cx="5" cy="13" r="1.8" fill="#3d4b55"/><circle cx="12.5" cy="13" r="1.8" fill="#3d4b55"/><path transform="translate(15,0.8) scale(1.0)" d="M3 0 H7 L4.8 4 H7.5 L1 11 L2.8 5.6 H0.4 Z" fill="#6aa51f"/></svg>
<svg class="a" style="left:566px;top:239px;" width="24" height="19" viewBox="0 0 24 19"><path d="M2 17 L16 3 M4 5 L14 15" stroke="#3d4b55" stroke-width="1.2"/><g fill="#3d4b55"><circle cx="3.3" cy="9.5" r="1"/><circle cx="6" cy="12.5" r="1.1"/><circle cx="9" cy="10" r="1.8"/><circle cx="11.5" cy="6" r="1"/><circle cx="13.5" cy="11.5" r="1"/><circle cx="8.5" cy="4.5" r="0.9"/><circle cx="5.5" cy="16" r="1"/></g><path transform="translate(15,1.2) scale(1.0)" d="M3 0 H7 L4.8 4 H7.5 L1 11 L2.8 5.6 H0.4 Z" fill="#6aa51f"/></svg>
<div class="a" style="left:374.3px;top:255.2px;width:192.7px;height:41.6px;border:3.3px solid #c9a552;border-radius:20.8px"></div>
<div class="a" style="left:673.3px;top:78.2px;width:48px;height:40.6px;border:3.3px solid #c9a552;border-radius:19.5px"></div>
</body></html>
